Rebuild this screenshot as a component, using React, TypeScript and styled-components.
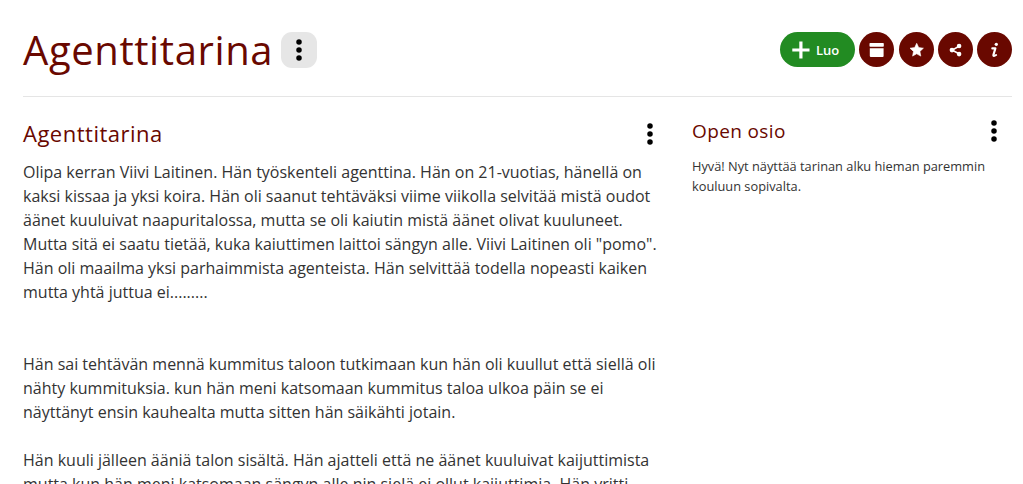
import type { ReactNode } from "react";
import styled, { createGlobalStyle } from "styled-components";

const GlobalStyle = createGlobalStyle`
  * {
    box-sizing: border-box;
  }

  body {
    margin: 0;
    background: #fff;
    color: #333;
    font-family: "Open Sans", sans-serif;
    font-size: 16px;
    line-height: 24px;
  }
`;

const Page = styled.div`
  height: 100vh;
  overflow: hidden;
  padding: 0 11px 0 23px;
`;

const Header = styled.header`
  display: flex;
  align-items: flex-start;
  justify-content: space-between;
  height: 97px;
  padding-top: 32px;
  border-bottom: 1px solid #e5e5e5;
`;

const TitleRow = styled.div`
  display: flex;
  gap: 8px;
`;

const Title = styled.h1`
  margin: 0;
  color: #690800;
  font-size: 40px;
  font-weight: 400;
  letter-spacing: 0.6px;
  line-height: 36px;
`;

const MenuButton = styled.button<{ $filled?: boolean }>`
  display: flex;
  align-items: center;
  justify-content: center;
  flex: none;
  width: 36px;
  height: 36px;
  padding: 0;
  border: 0;
  border-radius: 11px;
  background: ${(p) => (p.$filled ? "#e6e6e6" : "transparent")};
`;

const Actions = styled.div`
  display: flex;
  gap: 4.25px;
`;

const CreateButton = styled.button`
  display: flex;
  align-items: center;
  gap: 6px;
  width: 75px;
  height: 35px;
  padding: 0 0 0 12px;
  border: 0;
  border-radius: 18px;
  background: #228b22;
  color: #fff;
  font-family: inherit;
  font-size: 13px;
  font-weight: 600;
`;

const RoundButton = styled.button`
  width: 35px;
  height: 35px;
  padding: 0;
  border: 0;
  border-radius: 50%;
  background: #690800;

  svg {
    display: block;
  }
`;

const Columns = styled.main`
  display: flex;
  gap: 34px;
`;

const Story = styled.section`
  flex: none;
  width: 635px;
  padding-top: 19px;
`;

const Aside = styled.aside`
  flex: 1;
  padding-top: 16px;
`;

const SectionHead = styled.div<{ $gap: number }>`
  display: flex;
  align-items: center;
  justify-content: space-between;
  height: 36px;
  margin-bottom: ${(p) => p.$gap}px;
`;

const Heading = styled.h2`
  margin: 0 0 2px;
  color: #690800;
  font-size: 22px;
  font-weight: 400;
  letter-spacing: 0.5px;
  line-height: 22px;
`;

const AsideHeading = styled(Heading)`
  margin: 0;
  font-size: 19px;
  letter-spacing: 0.38px;
`;

const StoryMenu = styled(MenuButton)`
  margin-right: -10px;
`;

const Paragraph = styled.p<{ $after?: number }>`
  margin: 0 0 ${(p) => p.$after ?? 24}px;
  white-space: pre;
`;

const Note = styled.p`
  margin: 0;
  font-size: 12.8px;
  line-height: 20px;
  white-space: pre;
`;

function Dots() {
  return (
    <svg width="8" height="24" viewBox="0 0 8 24">
      <circle cx="4" cy="4" r="2.75" />
      <circle cx="4" cy="12" r="2.75" />
      <circle cx="4" cy="20" r="2.75" />
    </svg>
  );
}

function Action({ label, children }: { label: string; children: ReactNode }) {
  return (
    <RoundButton aria-label={label}>
      <svg width="35" height="35" viewBox="0 0 35 35" fill="#fff">
        {children}
      </svg>
    </RoundButton>
  );
}

export default function App() {
  return (
    <>
      <GlobalStyle />
      <Page>
        <Header>
          <TitleRow>
            <Title>Agenttitarina</Title>
            <MenuButton $filled aria-label="Valikko">
              <Dots />
            </MenuButton>
          </TitleRow>
          <Actions>
            <CreateButton>
              <svg width="18" height="18" viewBox="0 0 18 18" fill="#fff">
                <path d="M7.3 .5h3.2v6.9h7v3.2h-7v6.9H7.3v-6.9h-7V7.4h7z" />
              </svg>
              Luo
            </CreateButton>
            <Action label="Arkisto">
              <rect x="10.5" y="11" width="14.3" height="3.8" rx="0.8" />
              <path d="M10.8 16.2h13.8v7.8a1 1 0 0 1-1 1H11.8a1 1 0 0 1-1-1z" />
            </Action>
            <Action label="Suosikki">
              <path
                d="M17.7 11.3l2 4.3 4.7.6-3.5 3.2.9 4.7-4.1-2.3-4.1 2.3.9-4.7-3.5-3.2 4.7-.6z"
                stroke="#fff"
                strokeWidth="0.6"
                strokeLinejoin="round"
              />
            </Action>
            <Action label="Jaa">
              <path d="M21 14.2l-6.7 3.9 6.7 3.6" fill="none" stroke="#fff" strokeWidth="1.6" />
              <circle cx="21.1" cy="14" r="2.3" />
              <circle cx="14" cy="18.1" r="2.4" />
              <circle cx="21.1" cy="22.1" r="2.3" />
            </Action>
            <Action label="Tiedot">
              <circle cx="19.3" cy="12.3" r="1.65" />
              <path
                d="M15.3 16.4h3.1l-2 6.5c-.3 1.2.9 1.3 2.7.1"
                fill="none"
                stroke="#fff"
                strokeWidth="2.1"
                strokeLinecap="round"
                strokeLinejoin="round"
              />
            </Action>
          </Actions>
        </Header>
        <Columns>
          <Story>
            <SectionHead $gap={8}>
              <Heading>Agenttitarina</Heading>
              <StoryMenu aria-label="Valikko">
                <Dots />
              </StoryMenu>
            </SectionHead>
            <Paragraph $after={48}>
              {`Olipa kerran Viivi Laitinen. Hän työskenteli agenttina. Hän on 21-vuotias, hänellä on
kaksi kissaa ja yksi koira. Hän oli saanut tehtäväksi viime viikolla selvitää mistä oudot
äänet kuuluivat naapuritalossa, mutta se oli kaiutin mistä äänet olivat kuuluneet.
Mutta sitä ei saatu tietää, kuka kaiuttimen laittoi sängyn alle. Viivi Laitinen oli "pomo".
Hän oli maailma yksi parhaimmista agenteista. Hän selvittää todella nopeasti kaiken
mutta yhtä juttua ei.........`}
            </Paragraph>
            <Paragraph>
              {`Hän sai tehtävän mennä kummitus taloon tutkimaan kun hän oli kuullut että siellä oli
nähty kummituksia. kun hän meni katsomaan kummitus taloa ulkoa päin se ei
näyttänyt ensin kauhealta mutta sitten hän säikähti jotain.`}
            </Paragraph>
            <Paragraph>
              {`Hän kuuli jälleen ääniä talon sisältä. Hän ajatteli että ne äänet kuuluivat kaijuttimista
mutta kun hän meni katsomaan sängyn alle nin sielä ei ollut kaijuttimia. Hän yritti`}
            </Paragraph>
          </Story>
          <Aside>
            <SectionHead $gap={7}>
              <AsideHeading>Open osio</AsideHeading>
              <MenuButton aria-label="Valikko">
                <Dots />
              </MenuButton>
            </SectionHead>
            <Note>
              {`Hyvä! Nyt näyttää tarinan alku hieman paremmin
kouluun sopivalta.`}
            </Note>
          </Aside>
        </Columns>
      </Page>
    </>
  );
}
